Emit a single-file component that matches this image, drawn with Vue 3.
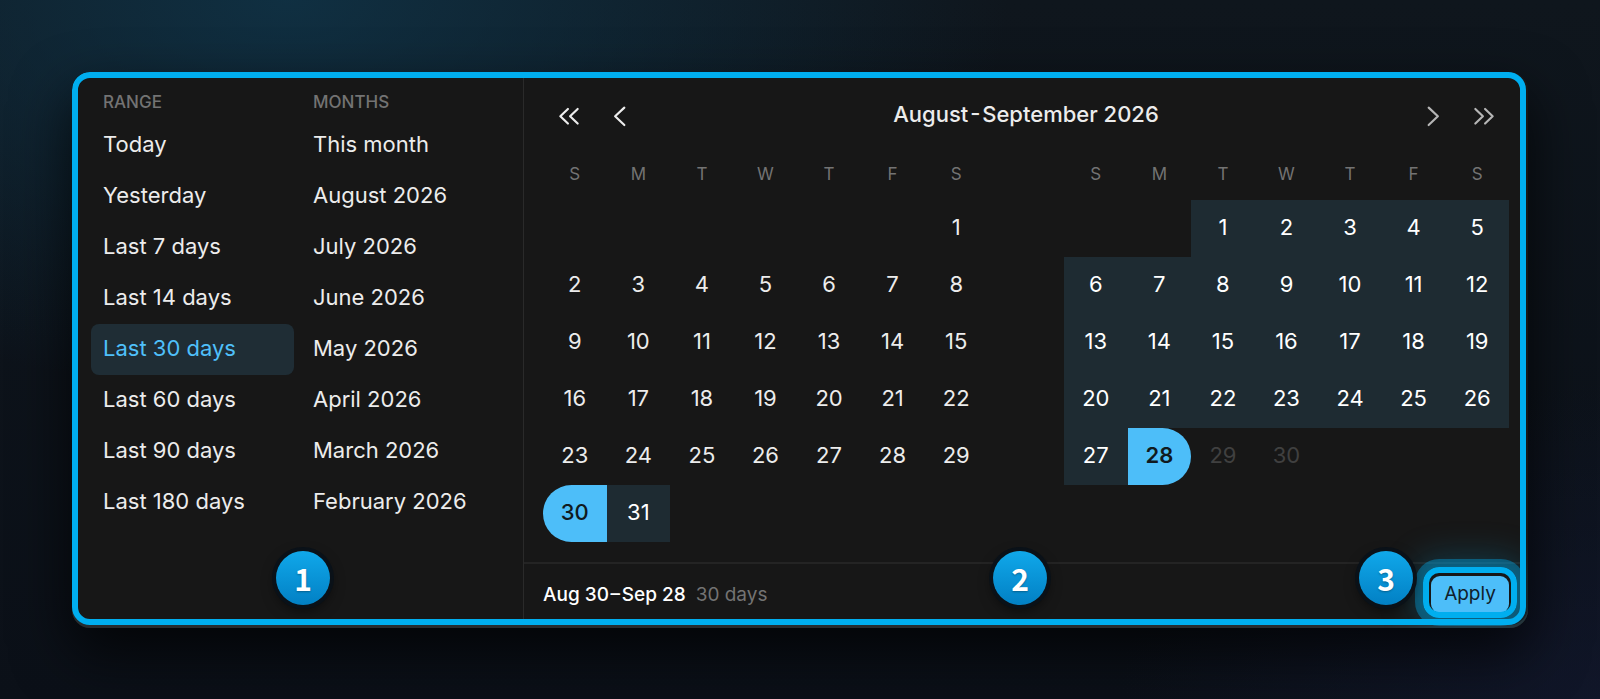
<template>
  <main class="stage">
    <section class="picker">
      <aside class="presets">
        <div v-for="group in groups" :key="group.title" class="group">
          <h2>{{ group.title }}</h2>
          <button
            v-for="item in group.items"
            :key="item"
            type="button"
            class="preset"
            :class="{ active: item === preset }"
            @click="preset = item"
          >{{ item }}</button>
        </div>
      </aside>

      <div class="main">
        <header class="nav">
          <button type="button" class="arrow" aria-label="Previous year">
            <svg viewBox="0 0 24 24"><path d="M11 5.5 4 12.3l7 6.7M20 5.5l-7 6.8 7 6.7" /></svg>
          </button>
          <button type="button" class="arrow" aria-label="Previous month">
            <svg viewBox="0 0 24 24"><path d="M16 4.300 7.500 12.300l8.500 8" /></svg>
          </button>
          <h1>August&#8202;-&#8202;September 2026</h1>
          <button type="button" class="arrow next" aria-label="Next month">
            <svg viewBox="0 0 24 24"><path d="m8 4.300 8.500 8L8 20.300" /></svg>
          </button>
          <button type="button" class="arrow next" aria-label="Next year">
            <svg viewBox="0 0 24 24"><path d="m4 5.500 7 6.800L4 19M13 5.500l7 6.800-7 6.700" /></svg>
          </button>
        </header>

        <div class="months">
          <table v-for="month in months" :key="month.name" :aria-label="month.name">
            <thead>
              <tr>
                <th v-for="(d, i) in weekdays" :key="i">{{ d }}</th>
              </tr>
            </thead>
            <tbody>
              <tr v-for="(week, w) in weeks(month)" :key="w">
                <td v-for="(day, i) in week" :key="i">
                  <button
                    v-if="day"
                    type="button"
                    class="day"
                    :class="dayClass(month, day)"
                    :disabled="isFuture(month, day)"
                  >{{ day }}</button>
                </td>
              </tr>
            </tbody>
          </table>
        </div>

        <footer class="footer">
          <strong>Aug 30&#8202;–&#8202;Sep 28</strong>
          <span class="count">30 days</span>
          <button type="button" class="apply">Apply</button>
        </footer>
      </div>

      <span class="badge badge-1">1</span>
      <span class="badge badge-2">2</span>
      <span class="badge badge-3">3</span>
    </section>
  </main>
</template>

<script setup>
import { ref } from 'vue'

const preset = ref('Last 30 days')
const weekdays = ['S', 'M', 'T', 'W', 'T', 'F', 'S']

const groups = [
  {
    title: 'Range',
    items: ['Today', 'Yesterday', 'Last 7 days', 'Last 14 days', 'Last 30 days', 'Last 60 days', 'Last 90 days', 'Last 180 days'],
  },
  {
    title: 'Months',
    items: ['This month', 'August 2026', 'July 2026', 'June 2026', 'May 2026', 'April 2026', 'March 2026', 'February 2026'],
  },
]

// offset = weekday of the 1st, from/to = selected days
const months = [
  { name: 'August 2026', offset: 6, days: 31, from: 30, to: 31, start: 30 },
  { name: 'September 2026', offset: 2, days: 30, from: 1, to: 28, end: 28, today: 28 },
]

function weeks(month) {
  const rows = []
  for (let r = 0; r * 7 < month.offset + month.days; r++) {
    const row = []
    for (let c = 1; c <= 7; c++) {
      const day = r * 7 + c - month.offset
      row.push(day > 0 && day <= month.days ? day : null)
    }
    rows.push(row)
  }
  return rows
}

function isFuture(month, day) {
  return month.today !== undefined && day > month.today
}

function dayClass(month, day) {
  return {
    'in-range': day >= month.from && day <= month.to,
    start: day === month.start,
    end: day === month.end,
    today: day === month.today,
  }
}
</script>

<style>
body {
  margin: 0;
  background: #0b1017;
}
</style>

<style scoped>
.stage {
  box-sizing: border-box;
  min-height: 100vh;
  padding: 72px 72px 71px;
  font-family: Inter, "Liberation Sans", sans-serif;
  color: #ececec;
  background:
    radial-gradient(ellipse 60% 75% at 18% 0%, rgba(16, 56, 78, 0.75), transparent 75%),
    radial-gradient(ellipse 40% 60% at 100% 100%, rgba(20, 26, 52, 0.6), transparent 75%),
    linear-gradient(#0f161d, #0b1018);
}

button {
  border: 0;
  padding: 0;
  background: none;
  color: inherit;
  font: inherit;
  cursor: pointer;
}

.picker {
  position: relative;
  display: flex;
  overflow: hidden;
  padding: 6px 8px 9px 6px;
  border-radius: 18px;
  background: #171717;
  box-shadow: inset 0 -3px #272c2f, 0 24px 56px 2px rgba(0, 0, 0, 0.7);
}

/* highlight frame, above the panel content */
.picker::after {
  content: "";
  position: absolute;
  inset: 0 2px 3px 0;
  border: 6px solid #00aeef;
  border-radius: 18px;
  pointer-events: none;
}

.presets {
  display: flex;
  gap: 7px;
  box-sizing: border-box;
  width: 446px;
  flex: none;
  padding: 13px 19px 0 13px;
  border-right: 1px solid #2a2a2a;
}

.group {
  flex: 1;
}

h2 {
  margin: 0;
  padding: 0 12px 7px;
  font-size: 17px;
  line-height: 22px;
  font-weight: 500;
  text-transform: uppercase;
  color: #737373;
}

.preset {
  display: block;
  width: 100%;
  height: 51px;
  padding: 0 12px 4px;
  border-radius: 8px;
  text-align: left;
  font-size: 22px;
}

.preset.active {
  background: #1f2d35;
  color: #4fc0fa;
}

.main {
  flex: 1;
  min-width: 0;
}

.nav {
  display: flex;
  align-items: center;
  height: 52px;
  padding: 12px 11px 0 19px;
}

.arrow {
  display: grid;
  place-items: center;
  width: 51px;
  height: 51px;
}

.arrow svg {
  width: 26px;
  height: 26px;
  fill: none;
  stroke: currentColor;
  stroke-width: 2;
  stroke-linecap: round;
  stroke-linejoin: round;
}

.arrow.next {
  color: #b5b5b5;
}

h1 {
  flex: 1;
  margin: 0;
  padding-bottom: 4px;
  text-align: center;
  font-size: 22px;
  font-weight: 500;
}

.months {
  display: grid;
  grid-template-columns: 1fr 1fr;
  gap: 76px;
  align-items: start;
  padding: 6px 11px 20px 19px;
}

table {
  width: 100%;
  table-layout: fixed;
  border-collapse: collapse;
}

th {
  height: 52px;
  padding: 0;
  font-size: 17px;
  font-weight: 400;
  color: #737373;
}

td {
  height: 57px;
  padding: 0;
}

.day {
  display: block;
  width: 100%;
  height: 57px;
  padding-bottom: 3px;
  font-size: 22px;
}

.day:disabled {
  color: #404040;
}

.in-range {
  background: #1e2b32;
  color: #fff;
}

.start,
.end {
  background: #4dbef9;
  color: #101a20;
}

.start {
  border-radius: 29px 0 0 29px;
  font-weight: 500;
}

.end {
  border-radius: 0 29px 29px 0;
}

.today {
  font-weight: 600;
}

.footer {
  display: flex;
  align-items: center;
  gap: 10px;
  height: 49px;
  padding: 6px 11px 0 19px;
  border-top: 2px solid #242424;
  font-size: 19px;
}

.footer strong {
  font-weight: 500;
  color: #fff;
}

.count {
  color: #737373;
}

.apply {
  position: relative;
  width: 78px;
  height: 37px;
  margin-left: auto;
  padding-bottom: 2px;
  border-radius: 9px;
  background: #4dbef9;
  color: #10202a;
}

/* focus halo around the button */
.apply::after {
  content: "";
  position: absolute;
  inset: -9px -8px -5px -8px;
  border: 6px solid #00aeef;
  border-radius: 16px;
  box-shadow: 0 0 0 8px rgba(0, 174, 239, 0.38), 0 0 36px 8px rgba(0, 174, 239, 0.25);
}

.badge {
  position: absolute;
  bottom: 23px;
  width: 54px;
  height: 54px;
  border-radius: 50%;
  background: linear-gradient(#10a8ea, #0280c4);
  box-shadow: 0 0 0 4px #0a1118, 0 5px 14px rgba(0, 0, 0, 0.6);
  font-family: "Noto Sans CJK SC", sans-serif;
  font-size: 30px;
  font-weight: 700;
  line-height: 54px;
  text-align: center;
  color: #fff;
  text-shadow: 0 1px 2px rgba(0, 0, 0, 0.3);
}

.badge-1 {
  left: 204px;
}

.badge-2 {
  right: 481px;
}

.badge-3 {
  right: 115px;
}
</style>
